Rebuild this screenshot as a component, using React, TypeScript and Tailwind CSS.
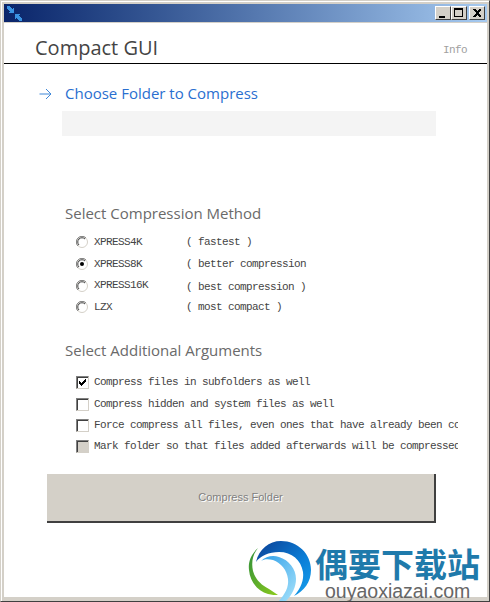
const monoFont = "font-['Liberation_Mono','DejaVu_Sans_Mono',monospace]";

const methods = [
  { name: 'XPRESS4K', note: '( fastest )', checked: false, rowClass: 'h-[22px]', noteClass: 'pt-px' },
  { name: 'XPRESS8K', note: '( better compression', checked: true, rowClass: 'h-[22px]', noteClass: 'pt-px' },
  { name: 'XPRESS16K', note: '( best compression )', checked: false, rowClass: 'h-[21px]', noteClass: 'pt-[3px]' },
  { name: 'LZX', note: '( most compact )', checked: false, rowClass: 'h-[22px]', noteClass: 'pt-px' },
];

const args = [
  { text: 'Compress files in subfolders as well', checked: true, disabled: false, rowClass: 'h-[23px]' },
  { text: 'Compress hidden and system files as well', checked: false, disabled: false, rowClass: 'h-[21px]' },
  { text: 'Force compress all files, even ones that have already been compressed', checked: false, disabled: false, rowClass: 'h-[21px]' },
  { text: 'Mark folder so that files added afterwards will be compressed too', checked: false, disabled: true, rowClass: 'h-[21px]' },
];

function WindowButton({ kind }: { kind: 'min' | 'max' | 'close' }) {
  return (
    <div className="w-4 h-[14px] bg-[#d4d0c8] border-t border-l border-t-white border-l-white border-r border-b border-r-[#404040] border-b-[#404040] flex items-center justify-center">
      <svg width="12" height="11" viewBox="0 0 12 11" shapeRendering="crispEdges">
        {kind === 'min' && <rect x="2" y="8" width="6" height="2" fill="#000" />}
        {kind === 'max' && <path d="M1 0h9v9H1zM2 2v6h7V2z" fill="#000" fillRule="evenodd" />}
        {kind === 'close' && <path d="M2 1h2l2 2 2-2h2v1L7 5l3 3v1H8L6 7 4 9H2V8l3-3-3-3z" fill="#000" />}
      </svg>
    </div>
  );
}

function Radio({ checked }: { checked: boolean }) {
  return (
    <svg width="12" height="12" viewBox="0 0 12 12" className="shrink-0">
      <circle cx="6" cy="6" r="5.5" fill="#fff" stroke="#d4d0c8" />
      <path d="M10 2A5.5 5.5 0 0 0 2 10" fill="none" stroke="#808080" />
      <path d="M9 3A4.2 4.2 0 0 0 3 9" fill="none" stroke="#404040" />
      {checked && <circle cx="6" cy="6" r="2" fill="#000" />}
    </svg>
  );
}

function CheckBox({ checked, disabled }: { checked: boolean; disabled: boolean }) {
  return (
    <div
      className={`w-[13px] h-[13px] shrink-0 border-t border-l border-t-[#808080] border-l-[#808080] border-r border-b border-r-[#d4d0c8] border-b-[#d4d0c8] shadow-[inset_1px_1px_0_#404040] ${
        disabled ? 'bg-[#d4d0c8]' : 'bg-white'
      }`}
    >
      {checked && (
        <svg width="11" height="11" viewBox="0 0 11 11" shapeRendering="crispEdges">
          <path d="M2 4h1v1h1v1h1V5h1V4h1V3h1V2h1v3H8v1H7v1H6v1H5v1H4V8H3V7H2z" fill="#000" />
        </svg>
      )}
    </div>
  );
}

function AppIcon() {
  return (
    <svg width="15" height="15" viewBox="0 0 15 15" className="ml-[3px]" shapeRendering="crispEdges">
      <path d="M0 0h3v1h1v1h1v1h1V2h1v5H2V6h1V5H2V4H1V3H0z" fill="#3a94e4" />
      <path d="M15 15h-3v-1h-1v-1h-1v-1H9v1H8V8h5v1h-1v1h1v1h1v1h1z" fill="#3a94e4" />
    </svg>
  );
}

function Watermark() {
  return (
    <div className="absolute left-[247px] top-[540px] w-[243px] h-[62px] overflow-hidden">
      <svg width="64" height="60" viewBox="0 0 64 60" className="absolute left-0 top-0">
        <defs>
          <linearGradient id="blueArc" x1="0" y1="0" x2="1" y2="1">
            <stop offset="0" stopColor="#0b3f94" />
            <stop offset="0.6" stopColor="#0b7fd8" />
            <stop offset="1" stopColor="#18a0ec" />
          </linearGradient>
          <linearGradient id="greenArc" x1="0" y1="0" x2="1" y2="1">
            <stop offset="0" stopColor="#2f8f3a" />
            <stop offset="1" stopColor="#8ccb1c" />
          </linearGradient>
          <linearGradient id="lightArc" x1="0" y1="0" x2="1" y2="1">
            <stop offset="0" stopColor="#2f9fe8" />
            <stop offset="1" stopColor="#a6e2fb" />
          </linearGradient>
        </defs>
        <path d="M8 21C11 8 21 0 33 0C50 0 63 13 63 29C63 41 56 50 46 55C53 47 56 39 55 31C53 19 44 11 31 11C21 11 12 15 8 21Z" fill="url(#blueArc)" />
        <path d="M10 7C3 13 0 21 1 29C2 41 10 50 20 53C24 54 27 54 30 54L21 48C13 44 7 38 5 30C3 21 5 13 10 7Z" fill="url(#greenArc)" />
        <path d="M13 20C18 15 25 14 31 16C41 19 48 28 48 38C48 46 44 54 38 60H31C37 53 41 46 40 38C39 29 33 22 25 19C20 18 16 18 13 20Z" fill="url(#lightArc)" />
      </svg>
      <div className="absolute left-[67px] top-[2px] font-['Noto_Sans_CJK_SC',sans-serif] font-bold text-[33px] leading-[40px] text-[#1f7aab] whitespace-nowrap">
        偶要下载站
      </div>
      <div className="absolute left-[77px] top-[40px] font-['Liberation_Sans',sans-serif] text-[19.5px] leading-[20px] text-[#666] whitespace-nowrap">
        ouyaoxiazai.com
      </div>
    </div>
  );
}

export default function App() {
  return (
    <div className="relative w-[490px] h-[602px] overflow-hidden bg-[#d4d0c8] border-t border-l border-t-[#d4d0c8] border-l-[#d4d0c8] border-r border-b border-r-[#404040] border-b-[#404040]">
      <div className="h-full flex flex-col border-t border-l border-t-white border-l-white pl-[2px] pr-[2px] pt-[2px] pb-[4px]">
        {/* Title bar */}
        <div className="h-[18px] shrink-0 flex items-center justify-between bg-gradient-to-r from-[#0a246a] to-[#a6caf0]">
          <AppIcon />
          <div className="flex items-center mr-[2px]">
            <WindowButton kind="min" />
            <WindowButton kind="max" />
            <div className="w-[2px]" />
            <WindowButton kind="close" />
          </div>
        </div>

        {/* Client area */}
        <div className="mt-px flex-1 bg-white font-['Open_Sans',sans-serif]">
          <div className="h-[41px] relative border-b border-black">
            <div className="pl-[31px] pt-[10px] text-[20px] leading-[29px] text-[#444]">Compact GUI</div>
            <div className={`absolute left-[439px] top-[21px] text-[11px] tracking-[-0.6px] leading-3 text-[#a0a0a0] ${monoFont}`}>Info</div>
          </div>

          <div className="flex items-center h-[22px] mt-[19px] pl-[35px]">
            <svg width="13" height="12" viewBox="0 0 13 12" className="shrink-0">
              <path d="M0.5 6H12M7 1l5 5-5 5" fill="none" stroke="#3f87d8" strokeWidth="1" />
            </svg>
            <div className="ml-[13px] pb-[2px] text-[15px] leading-[22px] text-[#2a6fd0]">Choose Folder to Compress</div>
          </div>

          <div className="ml-[58px] w-[374px] h-[25px] mt-[6px] bg-[#f4f4f4]" />

          <div className="pl-[61px] mt-[66px] text-[15px] leading-[22px] text-[#6a6a6a]">Select Compression Method</div>

          <div className={`mt-[7px] pl-[72px] text-[11px] tracking-[-0.6px] text-[#444] ${monoFont}`}>
            {methods.map((m) => (
              <div key={m.name} className={`flex items-center ${m.rowClass}`}>
                <Radio checked={m.checked} />
                <div className="w-[98px] pl-[6px] shrink-0">{m.name}</div>
                <div className={`whitespace-nowrap ${m.noteClass}`}>{m.note}</div>
              </div>
            ))}
          </div>

          <div className="pl-[61px] mt-[21px] text-[15px] leading-[22px] text-[#6a6a6a]">Select Additional Arguments</div>

          <div className={`mt-[10px] pl-[72px] text-[11px] tracking-[-0.6px] text-[#444] ${monoFont}`}>
            {args.map((a) => (
              <div key={a.text} className={`flex items-center ${a.rowClass}`}>
                <CheckBox checked={a.checked} disabled={a.disabled} />
                <div className="ml-[5px] w-[364px] overflow-hidden whitespace-nowrap">{a.text}</div>
              </div>
            ))}
          </div>

          <div className="ml-[43px] mt-[17px] w-[389px] h-[49px] bg-[#d4d0c8] border-r-2 border-b-2 border-r-[#404040] border-b-[#404040] flex items-center justify-center font-['Liberation_Sans',sans-serif] text-[11px] text-[#808080] [text-shadow:1px_1px_0_#fff]">
            Compress Folder
          </div>
        </div>
      </div>
      <Watermark />
    </div>
  );
}
